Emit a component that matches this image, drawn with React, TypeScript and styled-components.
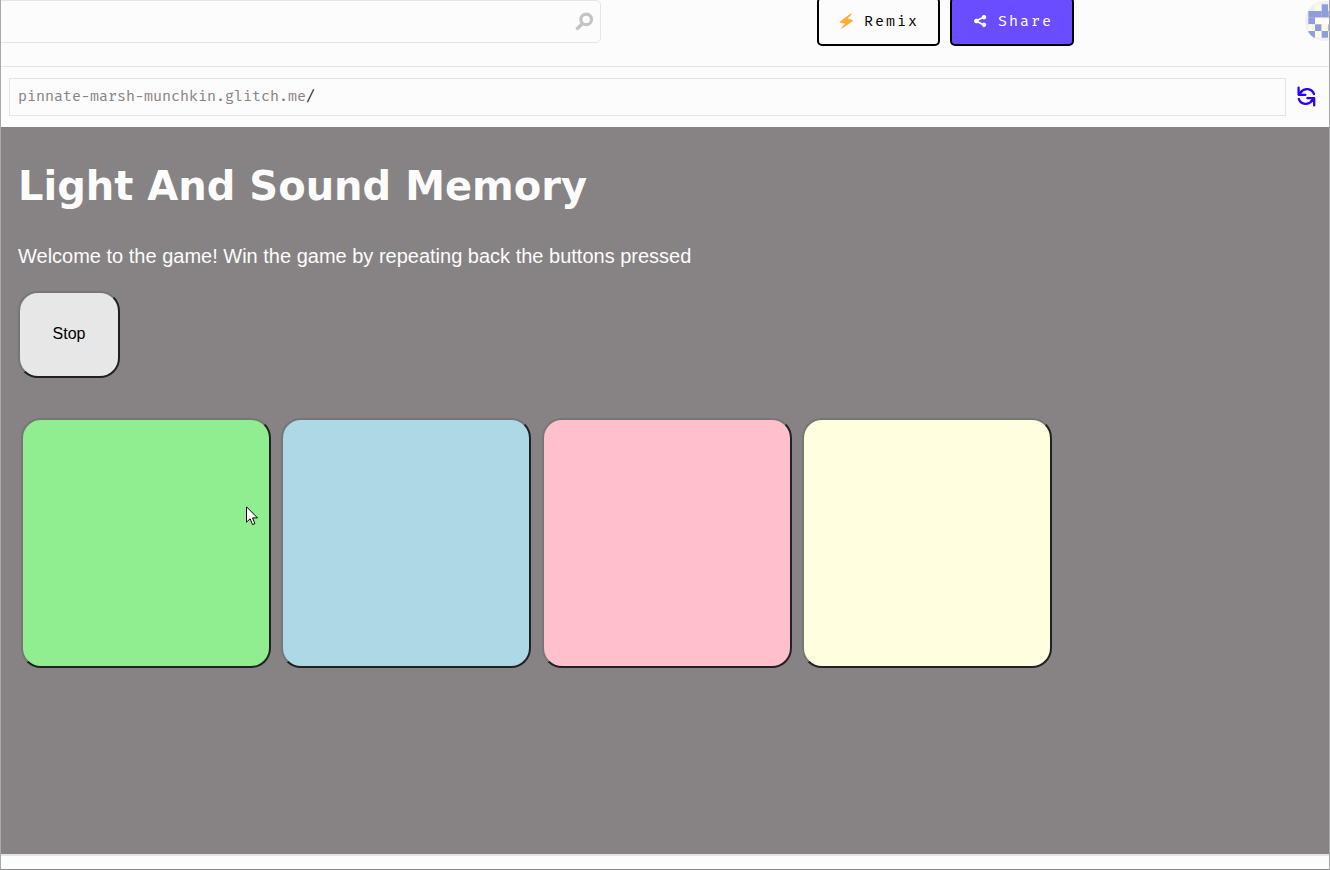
import React, { useState } from "react";
import styled, { createGlobalStyle } from "styled-components";

const GlobalStyle = createGlobalStyle`
  *, *::before, *::after { box-sizing: border-box; }
  html, body { margin: 0; padding: 0; background: #fcfcfc; }
  body { font-family: "Liberation Sans", Arial, sans-serif; font-size: 16px; }
`;

const mono = `"Fira Mono", "DejaVu Sans Mono", monospace`;

const Page = styled.div`
  min-height: 100vh;
  display: flex;
  flex-direction: column;
  overflow: hidden;
  background: #fcfcfc;
  border: 1px solid #a9a9a9;
  border-top: 0;
  border-bottom-color: #888888;
`;

const Header = styled.header`
  display: flex;
  align-items: flex-start;
  height: 67px;
  overflow: hidden;
  border-bottom: 1px solid #e5e5e5;
`;

const SearchForm = styled.form`
  flex: 0 1 600px;
  display: flex;
  align-items: center;
  height: 43px;
  padding-right: 6px;
  border: 1px solid #e5e5e5;
  border-left: 0;
  border-radius: 0 5px 5px 0;
`;

const SearchInput = styled.input`
  flex: 1;
  min-width: 0;
  height: 100%;
  padding: 0 16px;
  border: 0;
  outline: 0;
  background: transparent;
  font: 15px ${mono};
`;

const IconButton = styled.button`
  display: flex;
  padding: 0;
  border: 0;
  background: transparent;
  cursor: pointer;
`;

const Actions = styled.div`
  display: flex;
  gap: 10px;
  margin: -3px auto 0 216px;
`;

const ActionButton = styled.button<{ $primary?: boolean }>`
  display: flex;
  align-items: center;
  gap: 10px;
  height: 49px;
  padding: 0 19px 2px;
  border: 2px solid #000;
  border-radius: 5px;
  background: ${(p) => (p.$primary ? "#694dff" : "#fcfcfc")};
  color: ${(p) => (p.$primary ? "#fff" : "#000")};
  font: 15px ${mono};
  letter-spacing: 2px;
  cursor: pointer;
`;

const Avatar = styled.a`
  flex: none;
  margin: 1px -16px 0 0;
  height: 40px;
`;

const AddressBar = styled.div`
  display: flex;
  align-items: center;
  gap: 11px;
  height: 60px;
  padding: 0 13px 0 8px;
`;

const AddressField = styled.div`
  flex: 1;
  display: flex;
  align-items: center;
  height: 38px;
  padding: 0 8px 2px;
  border: 1px solid #e5e5e5;
  font: 15px ${mono};
`;

const Host = styled.label`
  color: #878283;
`;

const PathInput = styled.input`
  flex: 1;
  min-width: 0;
  padding: 0;
  border: 0;
  outline: 0;
  background: transparent;
  color: #222;
  font: inherit;
`;

const Preview = styled.main`
  position: relative;
  flex: 1;
  padding: 34px 17px 80px;
  background: #878283;
  color: #fcfcfc;
`;

const Title = styled.h1`
  margin: 0 0 30px;
  font: bold 40px/50px Verdana, "DejaVu Sans", sans-serif;
`;

const Intro = styled.p`
  margin: 0 0 20px;
  font-size: 20px;
  line-height: 30px;
`;

const GameButton = styled.button`
  border: 2px solid;
  border-color: #767676 #212121 #212121 #767676;
  border-radius: 20px;
  cursor: pointer;
`;

const StopButton = styled(GameButton)`
  display: block;
  width: 102px;
  height: 87px;
  padding: 0 0 2px;
  background: #e7e7e7;
  color: #000;
  font: 16px "Liberation Sans", Arial, sans-serif;
`;

const Pads = styled.div`
  margin-top: 40px;
`;

const Pad = styled(GameButton)<{ $color: string }>`
  width: 250px;
  height: 250px;
  margin: 0 3px;
  vertical-align: top;
  background: ${(p) => p.$color};
`;

const Pointer = styled.svg`
  position: absolute;
  left: 245px;
  top: 379px;
  pointer-events: none;
`;

const Footer = styled.footer`
  height: 15px;
  border-top: 2px solid #e5e5e5;
`;

const SearchIcon = () => (
  <svg width="19" height="19" viewBox="0 0 19 19" fill="none" stroke="#c3c3c3">
    <circle cx="11.2" cy="7.4" r="5.3" strokeWidth="3.2" />
    <path d="M7.2 11.8 2.4 16.4" strokeWidth="3.4" strokeLinecap="round" />
  </svg>
);

const BoltIcon = () => (
  <svg width="16" height="16" viewBox="0 0 16 16" fill="#ffac33">
    <path d="M12.8.6 2 8.4q-.7.7.2 1.1L7 10.8 3.2 15q0 .9.7.6L14.6 8.2q.7-.9-.2-1.2L9.6 5.6 13.5 1.4q0-.9-.7-.8Z" />
  </svg>
);

const ShareIcon = () => (
  <svg width="17" height="16" viewBox="0 0 17 16" fill="#fff" stroke="#fff">
    <path d="M13 4 5 8l8 4" fill="none" strokeWidth="1.8" />
    <circle cx="5.4" cy="8" r="1.9" />
    <circle cx="13" cy="4.2" r="1.8" />
    <circle cx="13" cy="11.8" r="1.8" />
  </svg>
);

const RefreshIcon = () => (
  <svg
    width="19"
    height="22"
    viewBox="0 0 19 22"
    fill="none"
    stroke="#2800ff"
    strokeLinecap="round"
    strokeLinejoin="round"
  >
    <path d="M1.6 1.6v7.2h6.8M2.2 8.2l2.4-2.6" strokeWidth="2.3" />
    <path d="M3.6 6.4C7.2 1.8 14.6 2 17 8" strokeWidth="2.3" />
    <path d="M17.2 19.4v-7.2h-6.8M16.6 12.8l-2.4 2.6" strokeWidth="2.3" />
    <path d="M15.2 14.6C11.6 19.2 4.2 19 1.8 13" strokeWidth="2.3" />
  </svg>
);

const AVATAR_ROWS = [".y#y.", "#####", "#www#", "y#y#y", "#y#y#"];
const AVATAR_FILLS: Record<string, string> = { "#": "#909ddc", y: "#fbfae4", w: "#ffffff" };

const AvatarIcon = () => (
  <svg width="40" height="40" viewBox="0 0 120 120">
    <clipPath id="avatar-clip">
      <circle cx="60" cy="60" r="60" />
    </clipPath>
    <g clipPath="url(#avatar-clip)">
      <rect width="120" height="120" fill="#f0f0f3" />
      {AVATAR_ROWS.map((row, y) =>
        [...row].map((c, x) =>
          c === "." ? null : (
            <rect
              key={`${x}-${y}`}
              x={x * 20 + 10}
              y={y * 20 + 10}
              width="20"
              height="20"
              fill={AVATAR_FILLS[c]}
            />
          )
        )
      )}
    </g>
  </svg>
);

const pads = [
  { name: "Green", color: "#90ee90" },
  { name: "Blue", color: "#add8e6" },
  { name: "Pink", color: "#ffc0cb" },
  { name: "Yellow", color: "#ffffe0" },
];

export default function App() {
  const [path, setPath] = useState("/");
  return (
    <Page>
      <GlobalStyle />
      <Header>
        <SearchForm role="search" onSubmit={(e) => e.preventDefault()}>
          <SearchInput type="text" aria-label="Search" />
          <IconButton type="submit" aria-label="Submit search">
            <SearchIcon />
          </IconButton>
        </SearchForm>
        <Actions>
          <ActionButton type="button">
            <BoltIcon />
            Remix
          </ActionButton>
          <ActionButton type="button" $primary>
            <ShareIcon />
            Share
          </ActionButton>
        </Actions>
        <Avatar href="#" aria-label="Profile">
          <AvatarIcon />
        </Avatar>
      </Header>
      <AddressBar>
        <AddressField>
          <Host htmlFor="path">pinnate-marsh-munchkin.glitch.me</Host>
          <PathInput id="path" value={path} onChange={(e) => setPath(e.target.value)} />
        </AddressField>
        <IconButton type="button" aria-label="Refresh">
          <RefreshIcon />
        </IconButton>
      </AddressBar>
      <Preview>
        <Title>Light And Sound Memory</Title>
        <Intro>Welcome to the game! Win the game by repeating back the buttons pressed</Intro>
        <StopButton type="button">Stop</StopButton>
        <Pads>
          {pads.map((pad) => (
            <React.Fragment key={pad.name}>
              <Pad type="button" aria-label={pad.name} $color={pad.color} />{" "}
            </React.Fragment>
          ))}
        </Pads>
        <Pointer width="13" height="20" viewBox="0 0 13 20">
          <path d="M.5.8v15.4l3.6-3.4 2.5 5.8 2.3-1-2.4-5.7h5z" fill="#fff" stroke="#000" />
        </Pointer>
      </Preview>
      <Footer />
    </Page>
  );
}
